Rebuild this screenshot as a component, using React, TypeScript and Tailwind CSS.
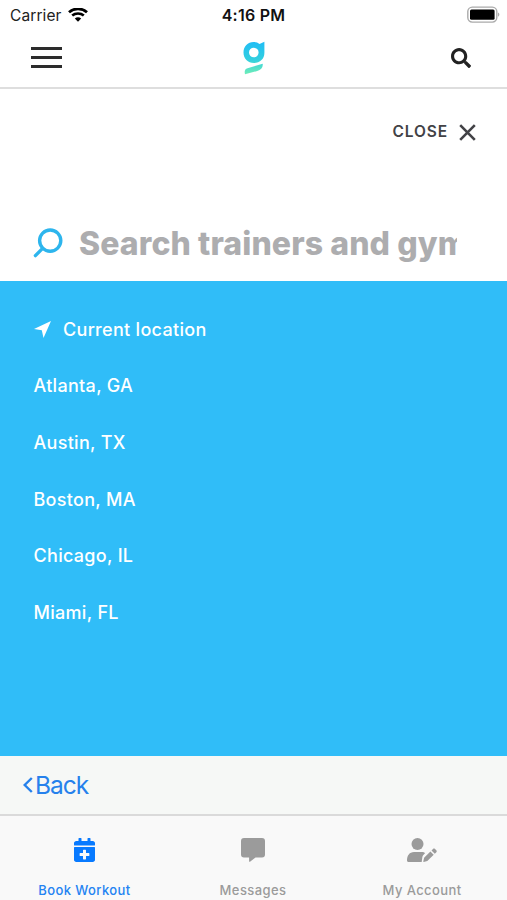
import React from 'react';
import { FaCalendarPlus, FaSearch } from 'react-icons/fa';

const cities = ['Atlanta, GA', 'Austin, TX', 'Boston, MA', 'Chicago, IL', 'Miami, FL'];

const StatusBar: React.FC = () => (
  <div className="grid h-[30px] grid-cols-[1fr_auto_1fr] items-center pl-[10px] pr-[7px]">
    <div className="flex items-center gap-[6px] pt-px">
      <span className="text-[15.5px] tracking-[0.1px] text-[#222]">Carrier</span>
      <svg className="h-[15px] w-[20px]" viewBox="0 0 20 15" fill="none">
        <path d="M1 4.2C6-.2 14-.2 19 4.2" stroke="#000" strokeWidth="2.8" />
        <path d="M4.2 7.6c3.3-2.9 8.3-2.9 11.600 0" stroke="#000" strokeWidth="2.6" />
        <path d="M6.8 10.5c1.800-1.700 4.600-1.700 6.400 0L10 13.700z" fill="#000" />
      </svg>
    </div>
    <span className="pr-[3px] text-center text-[16px] font-semibold tracking-[0.25px] whitespace-nowrap text-[#111]">
      4:16 PM
    </span>
    <svg className="mb-[2px] h-[17px] w-[33px] justify-self-end" viewBox="0 0 33 17" fill="none">
      <rect x="0.8" y="1.1" width="29" height="15" rx="4.5" stroke="#aaa" strokeWidth="1.4" />
      <rect x="3" y="3.5" width="24.6" height="10.2" rx="1.5" fill="#000" />
      <path d="M31.2 6.5c1.5.6 1.5 3.6 0 4.2z" fill="#999" />
    </svg>
  </div>
);

const Header: React.FC = () => (
  <header className="grid h-[59px] grid-cols-[1fr_auto_1fr] items-center border-b-2 border-[#dedede] px-[31px] pb-[2px]">
    <button className="flex w-[31px] flex-col gap-[6px]" aria-label="Menu">
      <span className="h-[3px] w-full bg-[#2c2c2c]" />
      <span className="h-[3px] w-full bg-[#2c2c2c]" />
      <span className="h-[3px] w-full bg-[#2c2c2c]" />
    </button>
    <svg className="h-[34px] w-[22px]" viewBox="0 0 22 34" fill="none">
      <defs>
        <linearGradient id="logo" x1="0" y1="0" x2="0" y2="34" gradientUnits="userSpaceOnUse">
          <stop stopColor="#1fbcf6" />
          <stop offset="0.55" stopColor="#32cfdf" />
          <stop offset="1" stopColor="#72efb6" />
        </linearGradient>
      </defs>
      <path
        fill="url(#logo)"
        fillRule="evenodd"
        d="M10.6 1c2.6 0 4.3.7 5.9 2L21.4.8v11C21.4 17.9 17 22 10.9 22 4.8 22 .5 17.4.5 11.5S4.8 1 10.6 1zM10.8 6.7a4.8 4.8 0 1 0 0 9.6 4.8 4.8 0 0 0 0-9.6z"
      />
      <path fill="url(#logo)" d="M19.7 22.8c.5 4-1.8 6.3-5.4 7.200L2 33.300c-.8-3.300 0-5.400 2.500-6.100z" />
    </svg>
    <button className="mr-[5px] justify-self-end" aria-label="Search">
      <FaSearch className="h-[20px] w-[20px] text-[#222]" />
    </button>
  </header>
);

const SearchPanel: React.FC = () => (
  <section className="flex h-[192px] flex-col bg-white">
    <button className="mt-[31px] mr-[31px] flex h-[24px] items-center gap-[11px] self-end text-[#424246]">
      <span className="text-[15.5px] font-semibold tracking-[0.9px]">CLOSE</span>
      <svg className="h-[17px] w-[17px]" viewBox="0 0 17 17" fill="none" stroke="currentColor" strokeWidth="2.6">
        <path d="M1.2 1.2l14.6 14.6M15.8 1.2L1.2 15.8" />
      </svg>
    </button>
    <div className="mt-[78px] mr-[50px] ml-[33px] flex h-[44px] items-center">
      <svg className="h-[32px] w-[30px] shrink-0" viewBox="0 0 30 32" fill="none" stroke="#2db5ed" strokeWidth="3.4">
        <circle cx="17.2" cy="12.6" r="10.6" />
        <path d="M9.6 20.4L2.4 27.6" strokeLinecap="round" />
      </svg>
      <div className="ml-[16px] flex-1 overflow-hidden text-[32px] leading-[44px] font-extrabold tracking-[0.1px] whitespace-nowrap text-[#adadaf]">
        Search trainers and gyms
      </div>
    </div>
  </section>
);

const Locations: React.FC = () => (
  <ul className="flex h-[475px] flex-col bg-[#30bdf8] pt-[20px] pl-[33.5px] text-[18px] font-medium tracking-[0.3px] text-white">
    <li className="flex h-[56.6px] items-center">
      <svg className="h-[17px] w-[17px]" viewBox="0 0 17 17" fill="white">
        <path d="M17 0L9.5 17 7.8 9.3 0 8.1z" />
      </svg>
      <span className="ml-[12.5px]">Current location</span>
    </li>
    {cities.map((city) => (
      <li key={city} className="flex h-[56.6px] items-center">
        {city}
      </li>
    ))}
  </ul>
);

const TabBar: React.FC = () => (
  <nav className="grid h-[86px] grid-cols-3 border-t-2 border-[#dadada] bg-[#f9f9f9] pt-[22px] text-[13px] font-medium tracking-[0.4px] text-[#9b9b9b]">
    <div className="flex flex-col items-center gap-[19px] text-[#2483f2]">
      <FaCalendarPlus className="h-[24px] w-[21px] text-[#087aff]" />
      <span>Book Workout</span>
    </div>
    <div className="flex flex-col items-center gap-[19px] pr-px">
      <svg className="h-[24px] w-[24px]" viewBox="0 0 24 24" fill="currentColor">
        <path d="M3 0h18a3 3 0 0 1 3 3v13.500a3 3 0 0 1-3 3h-6.500L9 23.700c-.4.300-.9 0-.9-.5v-3.700H3a3 3 0 0 1-3-3V3a3 3 0 0 1 3-3z" />
      </svg>
      <span>Messages</span>
    </div>
    <div className="flex flex-col items-center gap-[19px] pr-px">
      <svg className="h-[24px] w-[30px]" viewBox="0 0 30 24" fill="currentColor">
        <circle cx="10.500" cy="6" r="6" />
        <path d="M7 14h8c1.200 0 2.400.5 3.200 1.100L16.400 17c-.7.700-.9 1.500-1.100 2.600l-.6 4.400H1.500C.7 24 0 23.400 0 22.500 0 17.500 2.500 14 7 14z" />
        <path d="M23.400 13.500l3.300 3.300-6.400 6.300-3.600.9c-.3 0-.5-.2-.4-.5l.8-3.700z" />
        <path d="M24.500 12.400l1.500-1.500c.6-.6 1.400-.6 2 0l1.300 1.300c.6.6.6 1.400 0 2l-1.500 1.500z" />
      </svg>
      <span>My Account</span>
    </div>
  </nav>
);

export default function App() {
  return (
    <div className="flex h-[900px] w-[507px] flex-col overflow-hidden bg-white font-['Inter',sans-serif]">
      <StatusBar />
      <Header />
      <SearchPanel />
      <Locations />
      <button className="flex h-[58px] items-center bg-[#f6f8f6] pl-[23px] text-[24.5px] text-[#2681ec]">
        <svg className="h-[16px] w-[10px]" viewBox="0 0 10 16" fill="none" stroke="currentColor" strokeWidth="2.4">
          <path d="M8.8 1L1.7 8l7.1 7" />
        </svg>
        <span className="ml-[2px] pt-px tracking-[-1px]">Back</span>
      </button>
      <TabBar />
    </div>
  );
}
